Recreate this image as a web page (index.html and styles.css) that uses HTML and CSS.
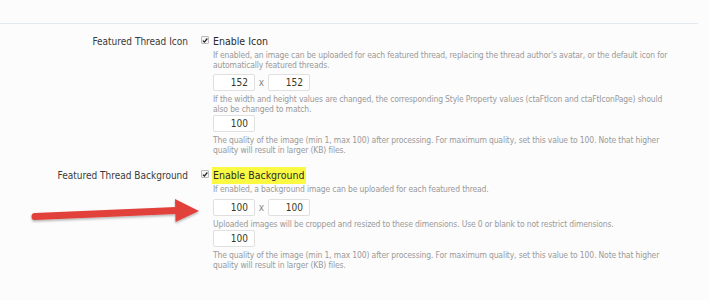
FILE: index.html
```html
<!DOCTYPE html>
<html>
<head>
<meta charset="utf-8">
<link rel="stylesheet" href="styles.css">
</head>
<body>
<div class="page">
  <div class="rule"></div>
  <div class="row first">
    <div class="label">Featured Thread Icon</div>
    <div class="ctrl">
      <div class="check-line">
        <span class="box"><svg width="7" height="7" viewBox="0 0 7 7"><path d="M1 3.6 L2.8 5.4 L6.2 1.2" fill="none" stroke="#222" stroke-width="1.5"/></svg></span>
        <span class="check-text">Enable Icon</span>
      </div>
      <p class="desc d1">If enabled, an image can be uploaded for each featured thread, replacing the thread author's avatar, or the default icon for<br>automatically featured threads.</p>
      <div class="pair"><span class="num">152</span><span class="x">x</span><span class="num">152</span></div>
      <p class="desc d2">If the width and height values are changed, the corresponding Style Property values (ctaFtIcon and ctaFtIconPage) should<br>also be changed to match.</p>
      <div class="pair"><span class="num">100</span></div>
      <p class="desc d3">The quality of the image (min 1, max 100) after processing. For maximum quality, set this value to 100. Note that higher<br>quality will result in larger (KB) files.</p>
    </div>
  </div>
  <div class="row second">
    <div class="label">Featured Thread Background</div>
    <div class="ctrl">
      <div class="check-line">
        <span class="box"><svg width="7" height="7" viewBox="0 0 7 7"><path d="M1 3.6 L2.8 5.4 L6.2 1.2" fill="none" stroke="#222" stroke-width="1.5"/></svg></span>
        <span class="check-text hl">Enable Background</span>
      </div>
      <p class="desc d4">If enabled, a background image can be uploaded for each featured thread.</p>
      <div class="pair"><span class="num">100</span><span class="x">x</span><span class="num">100</span></div>
      <p class="desc d5">Uploaded images will be cropped and resized to these dimensions. Use 0 or blank to not restrict dimensions.</p>
      <div class="pair"><span class="num">100</span></div>
      <p class="desc d3">The quality of the image (min 1, max 100) after processing. For maximum quality, set this value to 100. Note that higher<br>quality will result in larger (KB) files.</p>
    </div>
  </div>
  <svg class="arrow" width="180" height="40" viewBox="0 0 180 40">
    <defs>
      <filter id="sh" x="-10%" y="-50%" width="120%" height="200%">
        <feDropShadow dx="0" dy="1.5" stdDeviation="1.2" flood-color="#000" flood-opacity="0.3"/>
      </filter>
    </defs>
    <g filter="url(#sh)">
      <path d="M7 22.5 L148 16.5" stroke="#e2413b" stroke-width="7" stroke-linecap="round" fill="none"/>
      <path d="M147 5 L171 17 L147.5 28 Z" fill="#e2413b"/>
    </g>
  </svg>
</div>
</body>
</html>
```
FILE: styles.css
```css
html, body {
  margin: 0;
  padding: 0;
  background: #fcfcfd;
}
body {
  font-family: "DejaVu Sans Condensed", "DejaVu Sans", sans-serif;
  color: #333;
}
.page {
  position: relative;
  width: 709px;
  height: 300px;
  padding-top: 23px;
  box-sizing: border-box;
}
.rule {
  width: 698px;
  height: 1px;
  background: #e2e9ef;
}
.row {
  display: grid;
  grid-template-columns: 189px 1fr;
}
.row.first { margin-top: 9px; }
.row.second { margin-top: 12px; }
.label {
  text-align: right;
  font-size: 10px;
  line-height: 17px;
  color: #3a3a3a;
  padding-right: 1px;
}
.ctrl {
  padding-left: 24px;
}
.check-line {
  display: flex;
  align-items: center;
  height: 17px;
  margin-left: -12px;
}
.box {
  width: 8px;
  height: 8px;
  border: 1px solid #bbb;
  border-radius: 1px;
  background: #f4f4f4;
  display: flex;
  align-items: center;
  justify-content: center;
  margin-right: 3px;
  box-sizing: border-box;
  margin-top: -3px;
}
.box svg { display: block; }
.check-text {
  font-size: 10.5px;
  line-height: 17px;
  color: #2b2b2b;
  padding: 0 1px;
}
.hl { background: #fbf941; }
.desc {
  margin: 0;
  font-size: 8.5px;
  line-height: 10px;
  color: #9a9a9a;
  width: 490px;
  letter-spacing: -0.15px;
}
.d1 { margin: 0 0 4px; }
.d2 { margin: 3px 0 1px; }
.d3 { margin: 3px 0 0; }
.d4 { margin: 0 0 5px; }
.d5 { margin: 3px 0 1px; }
.pair {
  display: flex;
  align-items: center;
  height: 17px;
}
.num {
  width: 42px;
  height: 17px;
  box-sizing: border-box;
  border: 1px solid #e0e0e0;
  border-radius: 2px;
  background: #fff;
  font-size: 10px;
  line-height: 15px;
  text-align: right;
  padding-right: 6px;
  color: #3a3a1a;
}
.x {
  width: 13px;
  text-align: center;
  font-size: 10px;
  color: #888;
}
.arrow {
  position: absolute;
  left: 28px;
  top: 194px;
}
```
